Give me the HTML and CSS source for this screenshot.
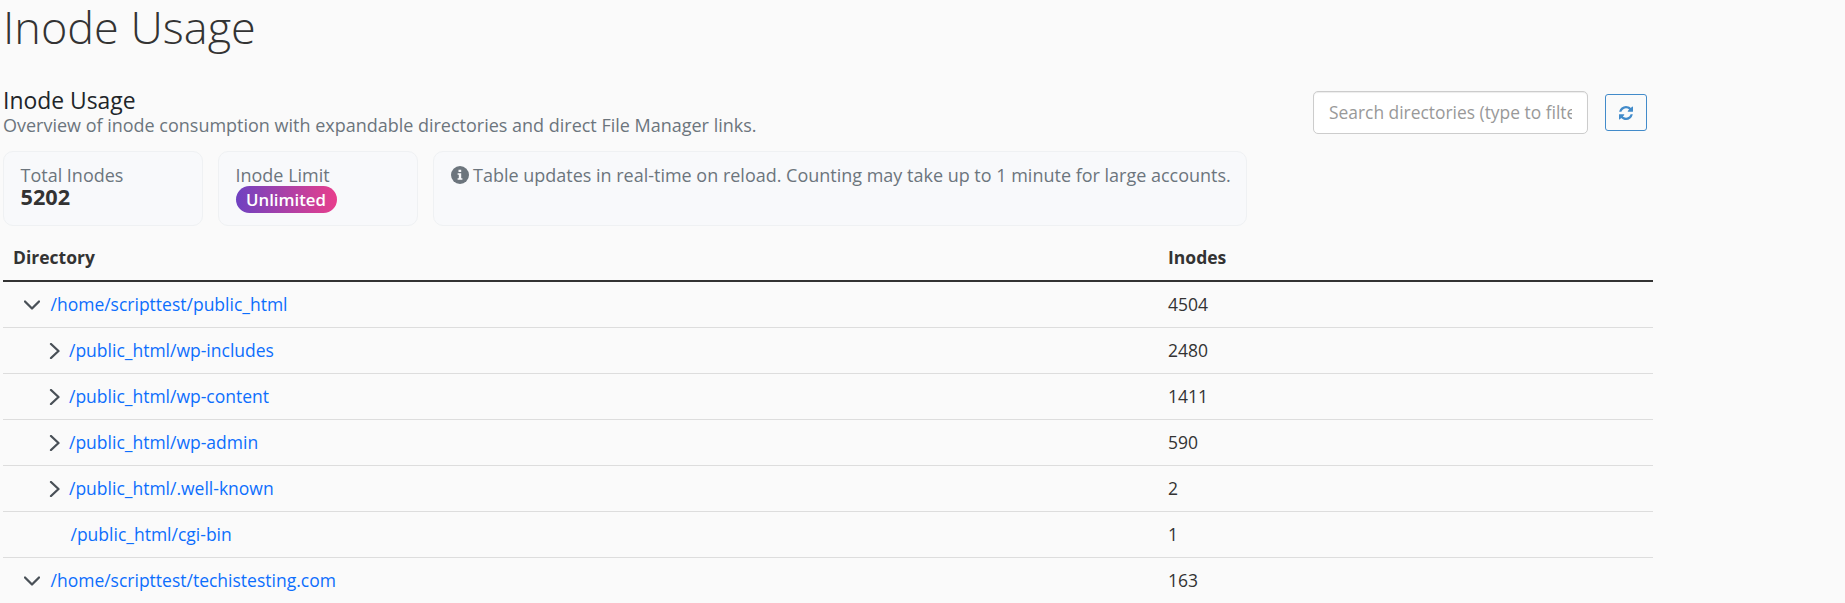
FILE: index.html
```html
<!DOCTYPE html>
<html lang="en">
<head>
<meta charset="utf-8">
<title>Inode Usage</title>
<link rel="stylesheet" href="styles.css">
</head>
<body>
<svg class="sprite" width="0" height="0" aria-hidden="true">
  <symbol id="down" viewBox="0 0 16 16"><path d="M1 4.500 8 11.500 15 4.500" fill="none" stroke="currentColor" stroke-width="2.3" stroke-linecap="round" stroke-linejoin="round"/></symbol>
  <symbol id="right" viewBox="0 0 16 16"><path d="M5 1 12.500 8 5 15" fill="none" stroke="currentColor" stroke-width="2.3" stroke-linecap="round" stroke-linejoin="round"/></symbol>
</svg>
<main class="page">
  <h1 class="page-title">Inode Usage</h1>
  <header class="toolbar">
    <div class="intro">
      <h2 class="heading">Inode Usage</h2>
      <p class="muted">Overview of inode consumption with expandable directories and direct File Manager links.</p>
    </div>
    <div class="actions">
      <input class="search" type="text" placeholder="Search directories (type to filter)">
      <button class="reload" type="button" aria-label="Reload">
        <svg class="reload-icon" viewBox="0 0 1536 1536"><path fill="currentColor" d="M1511 928q0 5-1 7-64 268-268 434.500T764 1536q-146 0-282.500-55T238 1324l-129 129q-19 19-45 19t-45-19-19-45V960q0-26 19-45t45-19h448q26 0 45 19t19 45-19 45l-137 137q71 66 161 102t187 36q134 0 250-65t186-179q11-17 53-117 8-23 30-23h192q13 0 22.500 9.500t9.500 22.500zm25-800v448q0 26-19 45t-45 19h-448q-26 0-45-19t-19-45 19-45l138-138Q969 256 768 256q-134 0-250 65T332 500q-11 17-53 117-8 23-30 23H50q-13 0-22.500-9.500T18 608v-7q65-268 270-434.500T768 0q146 0 284 55.500T1297 212l130-129q19-19 45-19t45 19 19 45z"/></svg>
      </button>
    </div>
  </header>
  <section class="cards">
    <div class="card"><div class="muted">Total Inodes</div><div class="total">5202</div></div>
    <div class="card"><div class="muted">Inode Limit</div><span class="badge">Unlimited</span></div>
    <div class="card card-note"><div class="muted note"><svg class="info" viewBox="0 0 18 18"><circle cx="9" cy="9" r="9" fill="currentColor"/><path class="info-mark" d="M7.500 3.700h2.700v2.300H7.500zM6.600 7.300h3.600v5h1.200v1.500H6.600v-1.500h1.200V8.800H6.600z"/></svg><span>Table updates in real-time on reload. Counting may take up to 1 minute for large accounts.</span></div></div>
  </section>
  <table class="table">
    <thead><tr><th class="col-dir">Directory</th><th>Inodes</th></tr></thead>
    <tbody>
      <tr><td><div class="dir"><svg class="chev"><use href="#down"/></svg><a class="link" href="#">/home/scripttest/public_html</a></div></td><td>4504</td></tr>
      <tr><td><div class="dir child"><svg class="chev"><use href="#right"/></svg><a class="link" href="#">/public_html/wp-includes</a></div></td><td>2480</td></tr>
      <tr><td><div class="dir child"><svg class="chev"><use href="#right"/></svg><a class="link" href="#">/public_html/wp-content</a></div></td><td>1411</td></tr>
      <tr><td><div class="dir child"><svg class="chev"><use href="#right"/></svg><a class="link" href="#">/public_html/wp-admin</a></div></td><td>590</td></tr>
      <tr><td><div class="dir child"><svg class="chev"><use href="#right"/></svg><a class="link" href="#">/public_html/.well-known</a></div></td><td>2</td></tr>
      <tr><td><div class="dir leaf"><a class="link" href="#">/public_html/cgi-bin</a></div></td><td>1</td></tr>
      <tr><td><div class="dir"><svg class="chev"><use href="#down"/></svg><a class="link" href="#">/home/scripttest/techistesting.com</a></div></td><td>163</td></tr>
    </tbody>
  </table>
</main>
</body>
</html>
```
FILE: styles.css
```css
* { box-sizing: border-box; }
body {
  margin: 0;
  background: #fafafa;
  color: #333;
  font: 17.5px/25px "Open Sans", sans-serif;
  overflow: hidden;
}
.sprite { display: block; }
.page { width: 1653px; padding-left: 3px; }
.page-title { margin: 0 0 33px; font-size: 45px; line-height: 54px; font-weight: 300; }
.toolbar { display: flex; justify-content: space-between; align-items: flex-start; height: 64px; padding-right: 6px; }
.intro { padding-top: 1px; }
.heading { margin: 0; font-size: 22.9px; line-height: 26px; font-weight: 500; color: #212529; }
.muted { margin: 0; font-size: 17.99px; color: #6c757d; }
.intro .muted { line-height: 23px; }
.actions { display: flex; align-items: center; gap: 17px; padding-top: 4px; }
.search {
  width: 275px;
  height: 43px;
  padding: 0 15px 2px;
  border: 1px solid #ccc;
  border-radius: 5px;
  background: #fff;
  box-shadow: inset 0 1px 1px rgba(0, 0, 0, .075);
  font: inherit;
  font-size: 17.4px;
}
.search::placeholder { color: #999; opacity: 1; }
.reload {
  display: flex;
  align-items: center;
  justify-content: center;
  width: 42px;
  height: 37px;
  padding: 0;
  border: 1px solid #428bca;
  border-radius: 3px;
  background: transparent;
  color: #428bca;
}
.reload-icon { width: 14px; height: 14px; }
.cards { display: flex; gap: 15px; height: 75px; }
.card { width: 200px; padding: 11px 16.5px; border: 1px solid #eff1f3; border-radius: 10px; background: #f8f9fb; }
.card-note { width: 814px; }
.total { margin-top: -1px; font-size: 21.7px; line-height: 20px; font-weight: 700; }
.badge {
  display: block;
  width: 101px;
  height: 27px;
  margin-top: -2px;
  border-radius: 14px;
  background: linear-gradient(90deg, #6f42c1, #e83e8c);
  color: #fff;
  font-size: 16.8px;
  line-height: 27px;
  font-weight: 600;
  text-align: center;
}
.note { display: flex; gap: 4.5px; white-space: nowrap; }
.info { flex: none; width: 18px; height: 18px; margin-top: 3px; }
.info-mark { fill: #f8f9fb; }
.table { width: 1650px; margin-top: 8px; border-collapse: separate; border-spacing: 0; table-layout: fixed; }
.col-dir { width: 1155px; }
.table th { height: 48px; padding: 0 10px; border-bottom: 2px solid #333; text-align: left; font-weight: 700; }
.table td { height: 46px; padding: 0 10px; border-bottom: 1px solid #ddd; }
.dir { display: flex; align-items: center; gap: 10.5px; padding-left: 11px; }
.child { gap: 7px; padding-left: 33px; }
.leaf { padding-left: 57.500px; }
.chev { width: 16px; height: 16px; color: #495057; }
.link { color: #0d6efd; text-decoration: none; }
```
